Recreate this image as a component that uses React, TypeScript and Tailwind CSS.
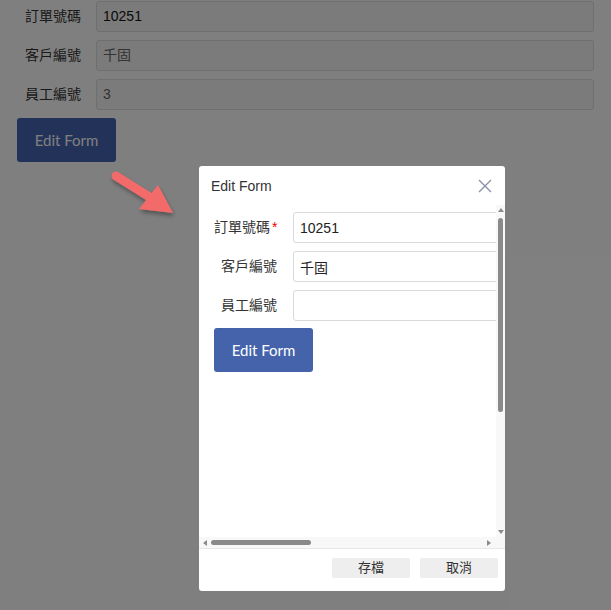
import React from 'react';

const cjk = "font-['Liberation_Sans','Noto_Sans_CJK_TC',sans-serif]";

const PageRow = ({ label, value, dim }: { label: string; value: string; dim?: boolean }) => (
  <div className="flex items-center h-[31px] mb-[8px]">
    <label className={`w-[96px] pl-[25px] whitespace-nowrap text-[14px] text-[#333] shrink-0 ${cjk}`}>{label}</label>
    <div
      className={`flex-1 h-[31px] mr-[17px] px-[6px] flex items-center rounded-[3px] border border-[#dedede] bg-[#f6f6f6] text-[14px] ${cjk} ${
        dim ? 'text-[#666]' : 'text-[#111]'
      }`}
    >
      {value}
    </div>
  </div>
);

const ModalRow = ({ label, value, required }: { label: string; value: string; required?: boolean }) => (
  <div className="flex items-center h-[31px] mb-[8px]">
    <label className={`w-[79px] pr-[16px] text-right whitespace-nowrap text-[14px] text-[#333] shrink-0 ${cjk}`}>
      {label}
      {required && <span className="text-[#e00] ml-[2px]">*</span>}
    </label>
    <input
      readOnly
      value={value}
      className={`w-[260px] shrink-0 h-[31px] px-[6px] rounded-[3px] border border-[#d9d9d9] bg-white text-[14px] text-[#222] outline-none ${cjk}`}
    />
  </div>
);

const Arrow = () => (
  <svg className="absolute left-[104px] top-[166px]" width="80" height="56" viewBox="0 0 80 56">
    <defs>
      <filter id="sh" x="-30%" y="-30%" width="160%" height="160%">
        <feDropShadow dx="1" dy="3" stdDeviation="2" floodColor="#000" floodOpacity="0.35" />
      </filter>
    </defs>
    <g filter="url(#sh)" fill="#f26b6b">
      <line x1="12" y1="10" x2="44" y2="30" stroke="#f26b6b" strokeWidth="9" strokeLinecap="round" />
      <polygon points="35,43 69,47 54,19" />
    </g>
  </svg>
);

const Caret = ({ dir }: { dir: 'up' | 'down' | 'left' | 'right' }) => {
  const pts = {
    up: '0,5 3,1 6,5',
    down: '0,1 3,5 6,1',
    left: '5,0 1,3 5,6',
    right: '1,0 5,3 1,6',
  }[dir];
  return (
    <svg width="6" height="6" viewBox="0 0 6 6">
      <polygon points={pts} fill="#8a8a8a" />
    </svg>
  );
};

export default function App() {
  return (
    <div className="relative w-[611px] h-[610px] overflow-hidden bg-white">
      <div className="pt-[1px]">
        <PageRow label="訂單號碼" value="10251" />
        <PageRow label="客戶編號" value="千固" dim />
        <PageRow label="員工編號" value="3" dim />
        <button className="ml-[17px] w-[99px] h-[44px] rounded-[3px] bg-[#4464b3] text-white text-[15px] font-['Lato',sans-serif]">
          Edit Form
        </button>
      </div>

      <div className="absolute inset-0 bg-black/50" />
      <Arrow />

      <div className="absolute left-[199px] top-[166px] w-[306px] h-[425px] bg-white rounded-[3px] flex flex-col overflow-hidden">
        <div className="h-[39px] flex items-center justify-between pl-[12px] pr-[13px] shrink-0">
          <span className="text-[14px] text-[#333] font-['Liberation_Sans',sans-serif] mt-[2px]">Edit Form</span>
          <svg width="14" height="14" viewBox="0 0 14 14" className="mt-[1px]">
            <path d="M1 1 L13 13 M13 1 L1 13" stroke="#8c90a6" strokeWidth="1.4" />
          </svg>
        </div>

        <div className="flex h-[332px] shrink-0">
          <div className="flex-1 overflow-hidden pt-[7px] pl-[15px]">
            <ModalRow label="訂單號碼" value="10251" required />
            <ModalRow label="客戶編號" value="千固" />
            <ModalRow label="員工編號" value="" />
            <button className="mt-[-1px] w-[99px] h-[44px] rounded-[3px] bg-[#4463ab] text-white text-[15px] font-['Lato',sans-serif]">
              Edit Form
            </button>
          </div>
          <div className="w-[9px] bg-[#f8f8f8] flex flex-col items-center pt-[2px] pb-[2px] shrink-0">
            <Caret dir="up" />
            <div className="w-[5px] h-[194px] mt-[5px] rounded-full bg-[#8a8a8a]" />
            <div className="flex-1" />
            <Caret dir="down" />
          </div>
        </div>

        <div className="h-[11px] flex items-center bg-[#f8f8f8] pl-[3px] pr-[13px] shrink-0">
          <Caret dir="left" />
          <div className="w-[100px] h-[5px] ml-[3px] rounded-full bg-[#8a8a8a]" />
          <div className="flex-1" />
          <Caret dir="right" />
        </div>

        <div className="border-t border-[#e6e6e6] flex-1 flex justify-end items-start pt-[9px] pr-[7px] gap-[10px]">
          <button className={`w-[78px] h-[20px] rounded-[2px] bg-[#eeeeee] text-[13px] text-[#333] ${cjk}`}>存檔</button>
          <button className={`w-[78px] h-[20px] rounded-[2px] bg-[#eeeeee] text-[13px] text-[#333] ${cjk}`}>取消</button>
        </div>
      </div>
    </div>
  );
}
